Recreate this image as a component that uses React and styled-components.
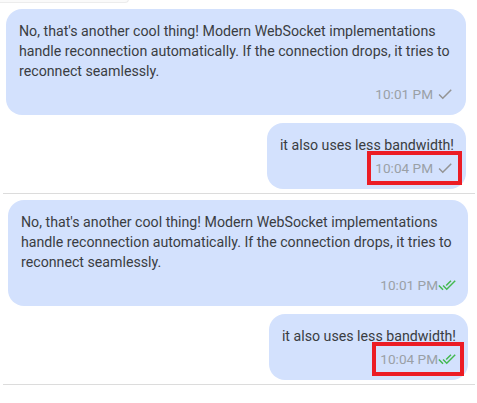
import styled, { createGlobalStyle } from 'styled-components'

const GlobalStyle = createGlobalStyle`
  html, body {
    margin: 0;
    padding: 0;
    background: #ffffff;
  }
  body {
    font-family: Roboto, "Noto Sans", Arial, sans-serif;
  }
`

const messages = [
  {
    id: 1,
    mine: false,
    text: "No, that's another cool thing! Modern WebSocket implementations handle reconnection automatically. If the connection drops, it tries to reconnect seamlessly.",
    time: '10:01 PM',
  },
  {
    id: 2,
    mine: true,
    text: 'it also uses less bandwidth!',
    time: '10:04 PM',
    highlight: true,
  },
]

const SingleCheck = () => (
  <svg width="18" height="18" viewBox="0 0 24 24" fill="#949494">
    <path d="M9 16.17L4.83 12l-1.42 1.41L9 19 21 7l-1.41-1.41z" />
  </svg>
)

const DoubleCheck = () => (
  <svg width="18" height="18" viewBox="0 0 24 24" fill="#43b94f">
    <path d="M18 7l-1.41-1.41-6.34 6.34 1.41 1.41L18 7zm4.24-1.41L11.66 16.17 7.48 12l-1.41 1.41L11.66 19l12-12-1.42-1.41zM.41 13.41L6 19l1.41-1.41L1.83 12 .41 13.41z" />
  </svg>
)

const Chat = ({ read, shift }) => (
  <Panel $shift={shift}>
    {messages.map((m) => (
      <Bubble key={m.id} $mine={m.mine}>
        <Text>{m.text}</Text>
        <Meta $highlight={m.highlight}>
          <Time $tight={read}>{m.time}</Time>
          {read ? <DoubleCheck /> : <SingleCheck />}
        </Meta>
      </Bubble>
    ))}
  </Panel>
)

const App = () => {
  return (
    <>
      <GlobalStyle />
      <Page>
        <TopStub />
        <Chat read={false} shift={0} />
        <Divider />
        <Chat read={true} shift={2} />
        <Divider />
      </Page>
    </>
  )
}

const Page = styled.div`
  width: 477px;
  display: flex;
  flex-direction: column;
`

const TopStub = styled.div`
  width: 128px;
  height: 3px;
  margin-top: -1px;
  border: 1px solid #ececec;
  border-top: none;
  border-left: none;
  border-bottom-right-radius: 10px;
  background: #fafafa;
`

const Panel = styled.div`
  display: flex;
  flex-direction: column;
  gap: 8px;
  padding: 6px ${(p) => 11 - p.$shift}px 4px ${(p) => 6 + p.$shift}px;
`

const Bubble = styled.div`
  align-self: ${(p) => (p.$mine ? 'flex-end' : 'stretch')};
  background: #d3e1fd;
  border-radius: 16px;
  padding: 12px 12px 12px 13px;
  display: flex;
  flex-direction: column;
  align-items: ${(p) => (p.$mine ? 'flex-end' : 'stretch')};
`

const Text = styled.div`
  font-size: 14.2px;
  line-height: 20px;
  color: #3a3d42;
`

const Meta = styled.div`
  align-self: flex-end;
  display: flex;
  align-items: center;
  margin-top: 4px;
  height: 18px;
  outline: ${(p) => (p.$highlight ? '4px solid #ec1c24' : 'none')};
  outline-offset: 4px;
`

const Time = styled.span`
  font-size: 13.6px;
  color: #9aa0a6;
  margin-right: ${(p) => (p.$tight ? '0' : '3px')};
`

const Divider = styled.div`
  height: 1px;
  margin: 0 2px 0 3px;
  background: #dcdcdc;
`

export default App
